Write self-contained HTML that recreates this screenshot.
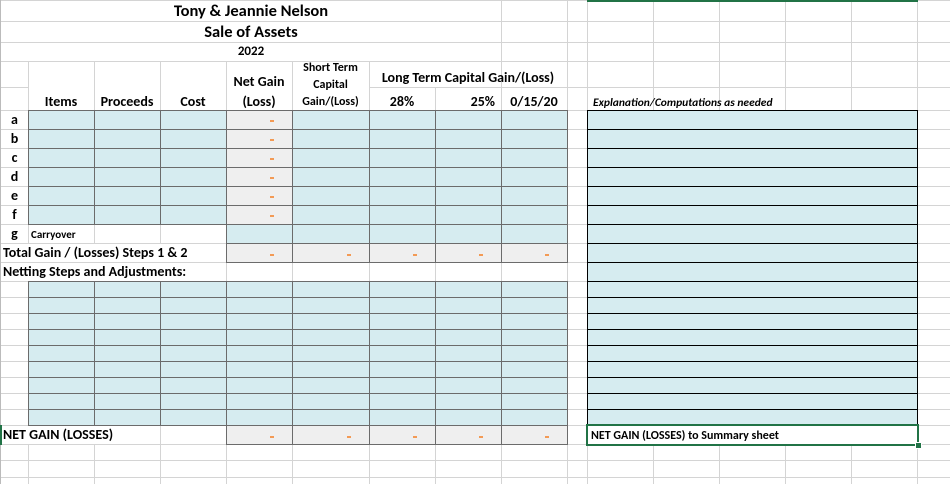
<!DOCTYPE html>
<html><head><meta charset="utf-8"><style>
*{margin:0;padding:0}
body{width:950px;height:484px;position:relative;overflow:hidden;background:#fff;font-family:Carlito,"Liberation Sans",sans-serif;color:#000}
div{position:absolute;box-sizing:border-box}
.h{height:1px;background:#d4d4d4;left:0;width:950px}
.v{width:1px;background:#d4d4d4}
.g{border-right:1px solid #6b6b6b;border-bottom:1px solid #6b6b6b}
.bl{background-color:#d6ecf0}
.gr{background-color:#efefef}
.w66{background-image:repeating-linear-gradient(to right,#6b6b6b 0 1px,transparent 1px 66px),repeating-linear-gradient(to bottom,#6b6b6b 0 1px,transparent 1px 19px)}
.w66s{background-image:repeating-linear-gradient(to right,#6b6b6b 0 1px,transparent 1px 66px),repeating-linear-gradient(to bottom,#6b6b6b 0 1px,transparent 1px 16px)}
.e{background-image:repeating-linear-gradient(to bottom,#000 0 1px,transparent 1px 19px);border:1px solid #000;border-top:none}
.es{background-image:repeating-linear-gradient(to bottom,#000 0 1px,transparent 1px 16px);border:1px solid #000;border-top:none}
.d{width:4px;height:2px;background:#f39a55}
.t{font-weight:bold;font-size:14px;white-space:nowrap;line-height:16px}
.c{text-align:center}
</style></head><body>
<div class="h" style="top:0"></div>
<div class="h" style="top:21px"></div>
<div class="h" style="top:42px"></div>
<div class="h" style="top:61px"></div>
<div class="h" style="top:87px;left:1px;width:27px"></div>
<div class="h" style="top:87px;left:369px;width:581px"></div>
<div class="h" style="top:110px"></div><div class="h" style="top:129px"></div><div class="h" style="top:148px"></div><div class="h" style="top:167px"></div><div class="h" style="top:186px"></div><div class="h" style="top:205px"></div><div class="h" style="top:224px"></div><div class="h" style="top:243px"></div><div class="h" style="top:262px"></div><div class="h" style="top:281px"></div><div class="h" style="top:297px"></div><div class="h" style="top:313px"></div><div class="h" style="top:329px"></div><div class="h" style="top:345px"></div><div class="h" style="top:361px"></div><div class="h" style="top:377px"></div><div class="h" style="top:393px"></div><div class="h" style="top:409px"></div><div class="h" style="top:425px"></div><div class="h" style="top:444px"></div><div class="h" style="top:460px"></div><div class="h" style="top:477px"></div>
<div class="v" style="left:0;top:0;height:484px;background:#bbb"></div>
<div class="v" style="left:28px;top:61px;height:182px"></div>
<div class="v" style="left:28px;top:281px;height:144px"></div>
<div class="v" style="left:28px;top:444px;height:40px"></div>
<div class="v" style="left:94px;top:61px;height:182px"></div>
<div class="v" style="left:94px;top:281px;height:144px"></div>
<div class="v" style="left:94px;top:444px;height:40px"></div>
<div class="v" style="left:160px;top:61px;height:182px"></div>
<div class="v" style="left:160px;top:281px;height:203px"></div>
<div class="v" style="left:226px;top:61px;height:423px"></div>
<div class="v" style="left:292px;top:61px;height:423px"></div>
<div class="v" style="left:369px;top:61px;height:423px"></div>
<div class="v" style="left:435px;top:87px;height:397px"></div>
<div class="v" style="left:501px;top:0;height:484px"></div>
<div class="v" style="left:567px;top:0;height:484px"></div>
<div class="v" style="left:587px;top:0;height:484px"></div>
<div class="v" style="left:653px;top:0;height:484px"></div>
<div class="v" style="left:719px;top:0;height:484px"></div>
<div class="v" style="left:785px;top:0;height:484px"></div>
<div class="v" style="left:851px;top:0;height:484px"></div>
<div class="v" style="left:917px;top:0;height:484px"></div>
<div style="left:587px;top:0;width:331px;height:2px;background:#217346"></div>

<div class="t c" style="left:1px;top:2px;width:500px;font-size:16.5px;line-height:19px">Tony &amp; Jeannie Nelson</div>
<div class="t c" style="left:1px;top:23px;width:500px;font-size:16.5px;line-height:19px">Sale of Assets</div>
<div class="t c" style="left:1px;top:44px;width:500px;font-size:13px">2022</div>

<div class="t c" style="left:28px;top:94px;width:66px">Items</div>
<div class="t c" style="left:94px;top:94px;width:66px">Proceeds</div>
<div class="t c" style="left:160px;top:94px;width:66px">Cost</div>
<div class="t c" style="left:226px;top:74px;width:66px">Net Gain</div>
<div class="t c" style="left:226px;top:94px;width:66px">(Loss)</div>
<div class="t c" style="left:292px;top:60px;width:77px;font-size:12px;line-height:17px">Short Term<br>Capital<br>Gain/(Loss)</div>
<div class="t c" style="left:369px;top:70px;width:198px">Long Term Capital Gain/(Loss)</div>
<div class="t c" style="left:369px;top:94px;width:66px">28%</div>
<div class="t" style="left:435px;top:94px;width:60px;text-align:right">25%</div>
<div class="t c" style="left:501px;top:94px;width:66px">0/15/20</div>
<div class="t" style="left:593px;top:95px;font-size:11.5px;font-style:italic">Explanation/Computations as needed</div>

<div class="t c" style="left:1px;top:112px;width:27px">a</div>
<div class="t c" style="left:1px;top:131px;width:27px">b</div>
<div class="t c" style="left:1px;top:150px;width:27px">c</div>
<div class="t c" style="left:1px;top:169px;width:27px">d</div>
<div class="t c" style="left:1px;top:188px;width:27px">e</div>
<div class="t c" style="left:1px;top:207px;width:27px">f</div>
<div class="t c" style="left:1px;top:226px;width:27px">g</div>
<div class="t" style="left:31px;top:227px;font-size:11px">Carryover</div>
<div class="t" style="left:3px;top:245px;font-size:14px">Total Gain / (Losses) Steps 1 &amp; 2</div>
<div class="t" style="left:3px;top:264px;font-size:14px">Netting Steps and Adjustments:</div>

<div class="g bl w66" style="left:28px;top:110px;width:199px;height:115px"></div>
<div class="g gr w66" style="left:226px;top:110px;width:67px;height:115px"></div>
<div class="g bl w66" style="left:292px;top:110px;width:78px;height:115px;background-image:repeating-linear-gradient(to right,#6b6b6b 0 1px,transparent 1px 77px),repeating-linear-gradient(to bottom,#6b6b6b 0 1px,transparent 1px 19px)"></div>
<div class="g bl w66" style="left:369px;top:110px;width:199px;height:115px"></div>
<div class="g bl w66" style="left:226px;top:224px;width:67px;height:20px"></div>
<div class="g bl w66" style="left:292px;top:224px;width:78px;height:20px;background-image:repeating-linear-gradient(to right,#6b6b6b 0 1px,transparent 1px 77px),repeating-linear-gradient(to bottom,#6b6b6b 0 1px,transparent 1px 19px)"></div>
<div class="g bl w66" style="left:369px;top:224px;width:199px;height:20px"></div>
<div class="g gr w66" style="left:226px;top:243px;width:67px;height:20px"></div>
<div class="g gr w66" style="left:292px;top:243px;width:78px;height:20px;background-image:repeating-linear-gradient(to right,#6b6b6b 0 1px,transparent 1px 77px),repeating-linear-gradient(to bottom,#6b6b6b 0 1px,transparent 1px 19px)"></div>
<div class="g gr w66" style="left:369px;top:243px;width:199px;height:20px"></div>
<div class="g bl w66s" style="left:28px;top:281px;width:199px;height:145px"></div>
<div class="g bl w66s" style="left:226px;top:281px;width:67px;height:145px"></div>
<div class="g bl w66s" style="left:292px;top:281px;width:78px;height:145px;background-image:repeating-linear-gradient(to right,#6b6b6b 0 1px,transparent 1px 77px),repeating-linear-gradient(to bottom,#6b6b6b 0 1px,transparent 1px 16px)"></div>
<div class="g bl w66s" style="left:369px;top:281px;width:199px;height:145px"></div>
<div class="t" style="left:3px;top:427px;font-size:14px">NET GAIN (LOSSES)</div>
<div style="left:0;top:425px;width:2px;height:20px;background:#217346"></div>
<div class="g gr w66" style="left:226px;top:425px;width:67px;height:20px"></div>
<div class="g gr w66" style="left:292px;top:425px;width:78px;height:20px;background-image:repeating-linear-gradient(to right,#6b6b6b 0 1px,transparent 1px 77px),repeating-linear-gradient(to bottom,#6b6b6b 0 1px,transparent 1px 19px)"></div>
<div class="g gr w66" style="left:369px;top:425px;width:199px;height:20px"></div>

<div class="d" style="left:270px;top:120px"></div><div class="d" style="left:270px;top:139px"></div><div class="d" style="left:270px;top:158px"></div><div class="d" style="left:270px;top:177px"></div><div class="d" style="left:270px;top:196px"></div><div class="d" style="left:270px;top:215px"></div>
<div class="d" style="left:270px;top:254px"></div><div class="d" style="left:347px;top:254px"></div><div class="d" style="left:413px;top:254px"></div><div class="d" style="left:479px;top:254px"></div><div class="d" style="left:545px;top:254px"></div>
<div class="d" style="left:270px;top:436px"></div><div class="d" style="left:347px;top:436px"></div><div class="d" style="left:413px;top:436px"></div><div class="d" style="left:479px;top:436px"></div><div class="d" style="left:545px;top:436px"></div>

<div class="bl e" style="left:587px;top:110px;width:331px;height:172px"></div>
<div class="bl es" style="left:587px;top:281px;width:331px;height:145px"></div>
<div style="left:586px;top:424px;width:333px;height:22px;border:2px solid #217346;background:#fff"></div>
<div class="t" style="left:591px;top:428px;font-size:12px">NET GAIN (LOSSES) to Summary sheet</div>
<div style="left:915px;top:442px;width:5px;height:5px;background:#217346;border:1px solid #fff;box-sizing:content-box"></div>
</body></html>
